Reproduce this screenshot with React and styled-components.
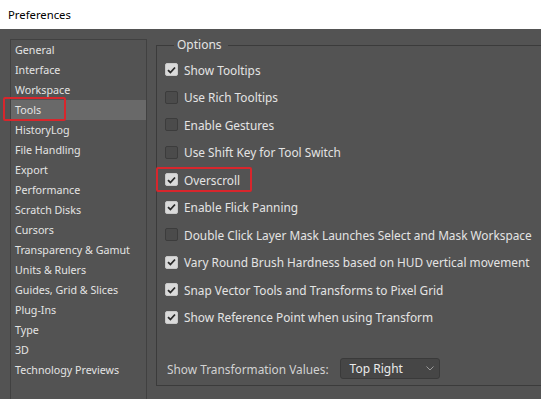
import React, { useState } from "react";
import styled, { createGlobalStyle } from "styled-components";

const GlobalStyle = createGlobalStyle`
  html, body {
    margin: 0;
    padding: 0;
    width: 541px;
    height: 399px;
    overflow: hidden;
    font-family: "Noto Sans", "Open Sans", sans-serif;
  }
`;

const Window = styled.div`
  display: flex;
  flex-direction: column;
  width: 541px;
  height: 399px;
  overflow: hidden;
`;

const TitleBar = styled.div`
  height: 29px;
  flex: none;
  display: flex;
  align-items: center;
  padding-left: 8px;
  background: #ffffff;
  color: #000;
  font-size: 11.3px;
`;

const Body = styled.div`
  flex: 1;
  display: flex;
  align-items: flex-start;
  gap: 9px;
  padding: 10px 0 0 10px;
  background: #535353;
  color: #e4e4e4;
  overflow: hidden;
`;

const Sidebar = styled.ul`
  list-style: none;
  margin: 0;
  padding: 0;
  width: 135px;
  height: 380px;
  flex: none;
  border: 1px solid #414141;
  font-size: 10.7px;
`;

const NavItem = styled.li`
  position: relative;
  height: 20px;
  line-height: 20px;
  padding-left: 4px;
  white-space: nowrap;
  background: ${({ $active }) => ($active ? "#696969" : "transparent")};
`;

const Mark = styled.span`
  position: absolute;
  left: ${({ $left }) => $left}px;
  top: ${({ $top }) => $top}px;
  width: ${({ $w }) => $w}px;
  height: ${({ $h }) => $h}px;
  box-sizing: border-box;
  border: 2px solid #d8262c;
  border-radius: 2px;
  pointer-events: none;
`;

const Options = styled.fieldset`
  margin: 0;
  margin-top: -2px;
  min-width: 0;
  flex: 1;
  box-sizing: border-box;
  height: 349px;
  padding: 3px 0 0 8px;
  border: 1px solid #3b3b3b;
  border-right: none;
  display: flex;
  flex-direction: column;
  font-size: 11.85px;
`;

const Legend = styled.legend`
  margin-left: 9px;
  padding: 0 6px 0 3px;
  font-size: 12px;
  line-height: 16px;
  color: #e4e4e4;
`;

const Row = styled.label`
  position: relative;
  display: flex;
  align-items: center;
  gap: 6px;
  height: 27.5px;
  white-space: nowrap;
`;

const Box = styled.span`
  width: 13px;
  height: 13px;
  flex: none;
  box-sizing: border-box;
  border-radius: 2px;
  display: flex;
  align-items: center;
  justify-content: center;
  background: ${({ $on }) => ($on ? "#dadada" : "#4b4b4b")};
  border: 1px solid ${({ $on }) => ($on ? "#c8c8c8" : "#3c3c3c")};
`;

const Footer = styled.div`
  display: flex;
  align-items: center;
  margin-top: 27px;
  padding-left: 2px;
  gap: 11px;
  color: #d2d2d2;
`;

const Select = styled.div`
  width: 100px;
  height: 21px;
  box-sizing: border-box;
  display: flex;
  align-items: center;
  justify-content: space-between;
  padding: 0 5px 0 9px;
  background: #464646;
  border: 1px solid #3a3a3a;
  border-radius: 3px;
  color: #eaeaea;
  font-size: 12px;
`;

const nav = [
  "General", "Interface", "Workspace", "Tools", "HistoryLog", "File Handling",
  "Export", "Performance", "Scratch Disks", "Cursors", "Transparency & Gamut",
  "Units & Rulers", "Guides, Grid & Slices", "Plug-Ins", "Type", "3D",
  "Technology Previews",
];

const opts = [
  ["Show Tooltips", true],
  ["Use Rich Tooltips", false],
  ["Enable Gestures", false],
  ["Use Shift Key for Tool Switch", false],
  ["Overscroll", true],
  ["Enable Flick Panning", true],
  ["Double Click Layer Mask Launches Select and Mask Workspace", false],
  ["Vary Round Brush Hardness based on HUD vertical movement", true],
  ["Snap Vector Tools and Transforms to Pixel Grid", true],
  ["Show Reference Point when using Transform", true],
];

const Check = () => (
  <svg width="9" height="8" viewBox="0 0 9 8">
    <path d="M1 4.2 L3.4 6.5 L8 1.5" fill="none" stroke="#2a2a2a" strokeWidth="1.8" />
  </svg>
);

const App = () => {
  const [active] = useState("Tools");

  return (
    <Window>
      <GlobalStyle />
      <TitleBar>Preferences</TitleBar>
      <Body>
        <Sidebar>
          {nav.map((n) => (
            <NavItem key={n} $active={n === active}>
              {n}
              {n === active && <Mark $left={-8} $top={-3} $w={63} $h={24} />}
            </NavItem>
          ))}
        </Sidebar>
        <Options>
          <Legend>Options</Legend>
          {opts.map(([label, on]) => (
            <Row key={label}>
              <Box $on={on}>{on && <Check />}</Box>
              {label}
              {label === "Overscroll" && <Mark $left={-9} $top={1} $w={96} $h={25} />}
            </Row>
          ))}
          <Footer>
            Show Transformation Values:
            <Select>
              Top Right
              <svg width="8" height="5" viewBox="0 0 8 5">
                <path d="M0.5 0.5 L4 4 L7.5 0.5" fill="none" stroke="#9a9a9a" strokeWidth="1" />
              </svg>
            </Select>
          </Footer>
        </Options>
      </Body>
    </Window>
  );
};

export default App;
